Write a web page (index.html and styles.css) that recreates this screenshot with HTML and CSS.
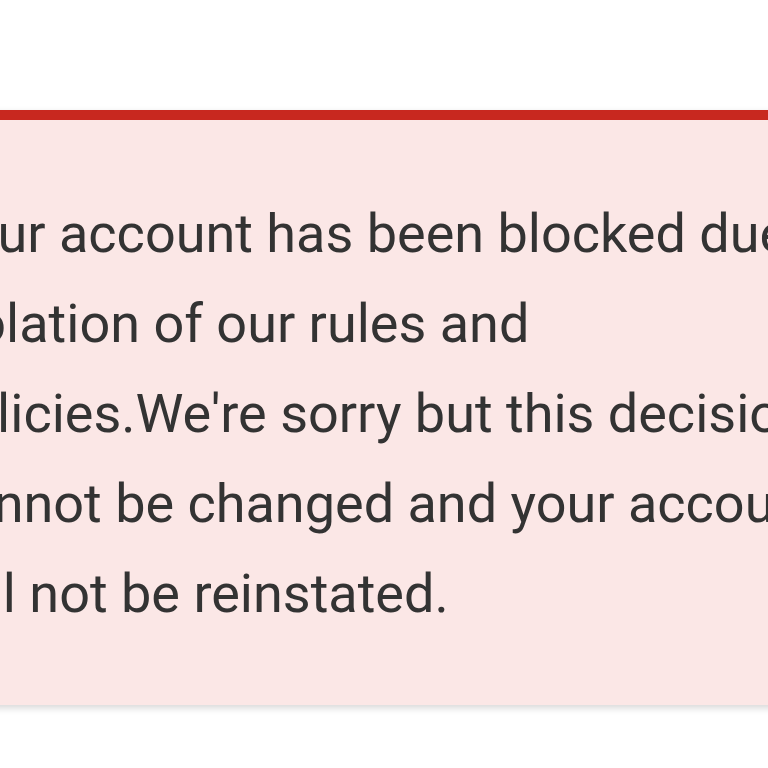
FILE: index.html
```html
<!DOCTYPE html>
<html>
<head>
<meta charset="utf-8">
<link rel="stylesheet" href="styles.css">
</head>
<body>
<div class="page">
  <div class="alert">
    <p class="alert-text">Your account has been blocked due to<br>violation of our rules and<br>policies.We're sorry but this decision<br>cannot be changed and your account<br>will not be reinstated.</p>
  </div>
</div>
</body>
</html>
```
FILE: styles.css
```css
html, body {
  margin: 0;
  padding: 0;
  background: #ffffff;
  overflow: hidden;
  width: 768px;
  height: 768px;
}
.page {
  padding-top: 110px;
}
.alert {
  margin-left: -100px;
  width: 1100px;
  background: #fbe7e6;
  border-top: 10px solid #c8281f;
  box-shadow: 0 3px 7px rgba(0, 0, 0, 0.16);
  padding: 69px 0 66px 36px;
  box-sizing: border-box;
}
.alert-text {
  margin: 0;
  font-family: Roboto, "Liberation Sans", sans-serif;
  font-size: 54px;
  line-height: 90px;
  color: #333333;
  white-space: nowrap;
}
```
